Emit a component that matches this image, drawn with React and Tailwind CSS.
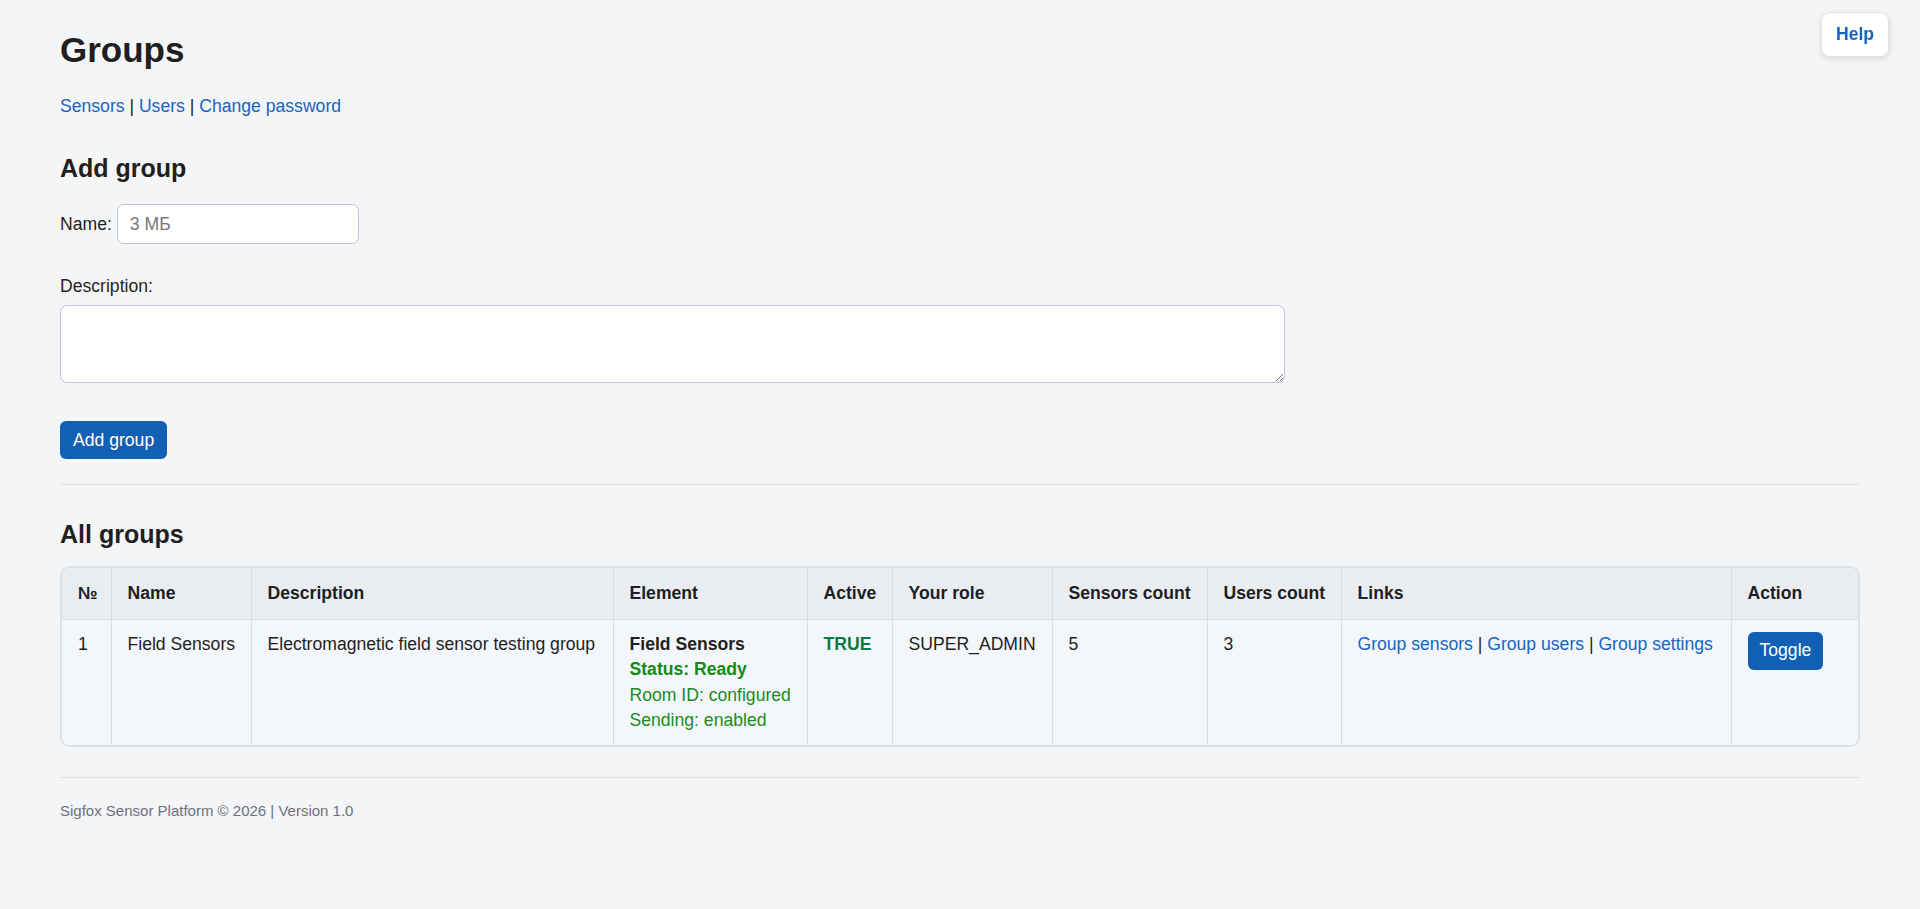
import React from 'react';

const columns = [
  { label: '№', width: 'w-[49px]' },
  { label: 'Name', width: 'w-[140px]' },
  { label: 'Description', width: 'w-[362px]' },
  { label: 'Element', width: 'w-[194px]' },
  { label: 'Active', width: 'w-[85px]' },
  { label: 'Your role', width: 'w-[160px]' },
  { label: 'Sensors count', width: 'w-[155px]' },
  { label: 'Users count', width: 'w-[134px]' },
  { label: 'Links', width: 'w-[390px]' },
  { label: 'Action', width: 'w-[127px]' },
];

const groups = [
  {
    id: 1,
    name: 'Field Sensors',
    description: 'Electromagnetic field sensor testing group',
    active: 'TRUE',
    role: 'SUPER_ADMIN',
    sensors: 5,
    users: 3,
  },
];

const cell = 'px-[16px] py-[12px] border-l border-[#d9dee5] whitespace-nowrap';

export default function App() {
  return (
    <div
      className="min-h-[909px] bg-[#f4f5f7] text-[#1f1f1f] text-[17.6px] leading-[25px]"
      style={{ fontFamily: '"Liberation Sans", Arial, sans-serif' }}
    >
      {/* Help button */}
      <button className="fixed top-[12px] right-[31px] w-[68px] h-[45px] rounded-[9px] bg-white border border-[#dfe3e8] shadow-[0_2px_6px_rgba(0,0,0,0.12)] text-[#1565c0] font-bold text-[17.6px]">
        Help
      </button>

      <div className="px-[60px] pt-[30px] pb-10">
        <h1 className="text-[35px] leading-[40px] font-bold">Groups</h1>

        <nav className="mt-[24px] leading-[25px]">
          <a href="#" className="text-[#1565c0]">Sensors</a>
          {' | '}
          <a href="#" className="text-[#1565c0]">Users</a>
          {' | '}
          <a href="#" className="text-[#1565c0]">Change password</a>
        </nav>

        <h2 className="mt-[34px] text-[25px] leading-[30px] font-bold">Add group</h2>

        {/* Add group form */}
        <form className="mt-[21px]">
          <div className="flex items-center gap-[5px]">
            <label>Name:</label>
            <input
              type="text"
              placeholder="3 МБ"
              className="w-[242px] h-[40px] px-3 rounded-[7px] border border-[#bcc6d4] bg-white placeholder:text-[#777] outline-none"
            />
          </div>

          <label className="block mt-[30px]">Description:</label>
          <textarea className="block mt-[6px] w-[1225px] h-[78px] rounded-[7px] border border-[#bcc6d4] bg-white outline-none p-2" />

          <button
            type="button"
            className="mt-[38px] h-[38px] px-[13px] rounded-[6px] bg-[#1160b5] text-white"
          >
            Add group
          </button>
        </form>

        <hr className="mt-[25px] border-t border-[#dde1e6]" />

        <h2 className="mt-[34px] text-[25px] leading-[30px] font-bold">All groups</h2>

        {/* Groups table */}
        <div className="mt-[17px] rounded-[10px] border-2 border-[#dde2e8] overflow-hidden">
          <table className="w-full border-collapse table-fixed">
            <thead>
              <tr className="bg-[#e9edf1]">
                {columns.map((col, i) => (
                  <th
                    key={col.label}
                    className={`${col.width} text-left font-bold px-[16px] py-[13px] whitespace-nowrap border-b border-[#d9dee5] ${i > 0 ? 'border-l' : ''}`}
                  >
                    {col.label}
                  </th>
                ))}
              </tr>
            </thead>
            <tbody className="leading-[25.3px]">
              {groups.map((g) => (
                <tr key={g.id} className="bg-[#f3f6fa] align-top">
                  <td className="px-[16px] py-[12px]">{g.id}</td>
                  <td className={cell}>{g.name}</td>
                  <td className={cell}>{g.description}</td>
                  <td className={cell}>
                    <div className="font-bold">Field Sensors</div>
                    <div className="font-bold text-[#138a13]">Status: Ready</div>
                    <div className="text-[#1b8c1b]">Room ID: configured</div>
                    <div className="text-[#1b8c1b]">Sending: enabled</div>
                  </td>
                  <td className={`${cell} font-bold text-[#0b7a45]`}>{g.active}</td>
                  <td className={cell}>{g.role}</td>
                  <td className={cell}>{g.sensors}</td>
                  <td className={cell}>{g.users}</td>
                  <td className={cell}>
                    <a href="#" className="text-[#1565c0]">Group sensors</a>
                    {' | '}
                    <a href="#" className="text-[#1565c0]">Group users</a>
                    {' | '}
                    <a href="#" className="text-[#1565c0]">Group settings</a>
                  </td>
                  <td className={cell}>
                    <button className="h-[38px] px-3 rounded-[6px] bg-[#1160b5] text-white">
                      Toggle
                    </button>
                  </td>
                </tr>
              ))}
            </tbody>
          </table>
        </div>

        {/* Footer */}
        <footer className="mt-[30px] border-t border-[#dde1e6] pt-[20px] text-[15px] text-[#6b7280]">
          Sigfox Sensor Platform © 2026 | Version 1.0
        </footer>
      </div>
    </div>
  );
}
